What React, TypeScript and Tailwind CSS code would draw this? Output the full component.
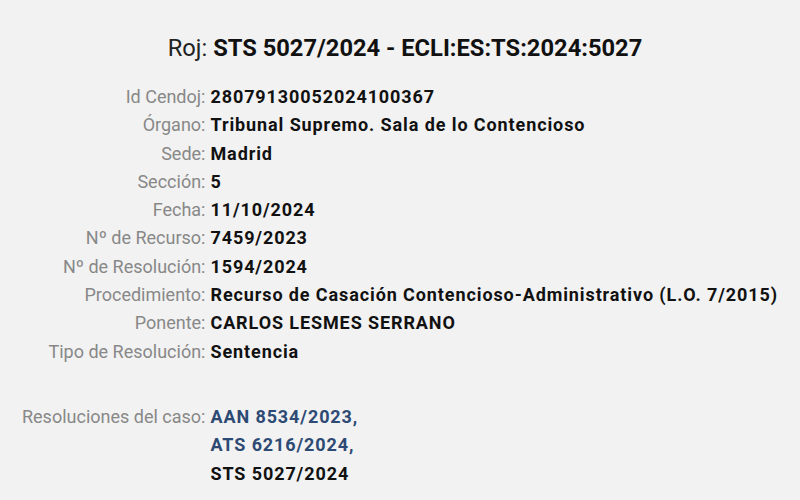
import React from "react";

const rows: [string, string][] = [
  ["Id Cendoj:", "28079130052024100367"],
  ["Órgano:", "Tribunal Supremo. Sala de lo Contencioso"],
  ["Sede:", "Madrid"],
  ["Sección:", "5"],
  ["Fecha:", "11/10/2024"],
  ["Nº de Recurso:", "7459/2023"],
  ["Nº de Resolución:", "1594/2024"],
  ["Procedimiento:", "Recurso de Casación Contencioso-Administrativo (L.O. 7/2015)"],
  ["Ponente:", "CARLOS LESMES SERRANO"],
  ["Tipo de Resolución:", "Sentencia"],
];

export default function App() {
  return (
    <div
      className="w-[800px] h-[500px] bg-[#f2f2f2] overflow-hidden flex flex-col items-center"
      style={{ fontFamily: "Roboto, 'Liberation Sans', sans-serif" }}
    >
      <h1 className="mt-[34px] ml-[10px] text-[23.7px] leading-[28px] text-[#222]">
        Roj: <span className="font-bold text-[#111]">STS 5027/2024 - ECLI:ES:TS:2024:5027</span>
      </h1>
      <div className="mt-[21px] grid grid-cols-[auto_auto] gap-x-[5px] text-[18px] leading-[28.3px]">
        {rows.map(([l, v]) => (
          <React.Fragment key={l}>
            <div className="text-right text-[#888]">{l}</div>
            <div className="font-bold tracking-[0.9px] text-[#111]">{v}</div>
          </React.Fragment>
        ))}
        <div className="h-[37px]" />
        <div className="h-[37px]" />
        <div className="text-right text-[#888]">Resoluciones del caso:</div>
        <div className="font-bold tracking-[0.9px] flex flex-col">
          <span className="text-[#2d4a74]">AAN 8534/2023,</span>
          <span className="text-[#2d4a74]">ATS 6216/2024,</span>
          <span className="text-[#111]">STS 5027/2024</span>
        </div>
      </div>
    </div>
  );
}
